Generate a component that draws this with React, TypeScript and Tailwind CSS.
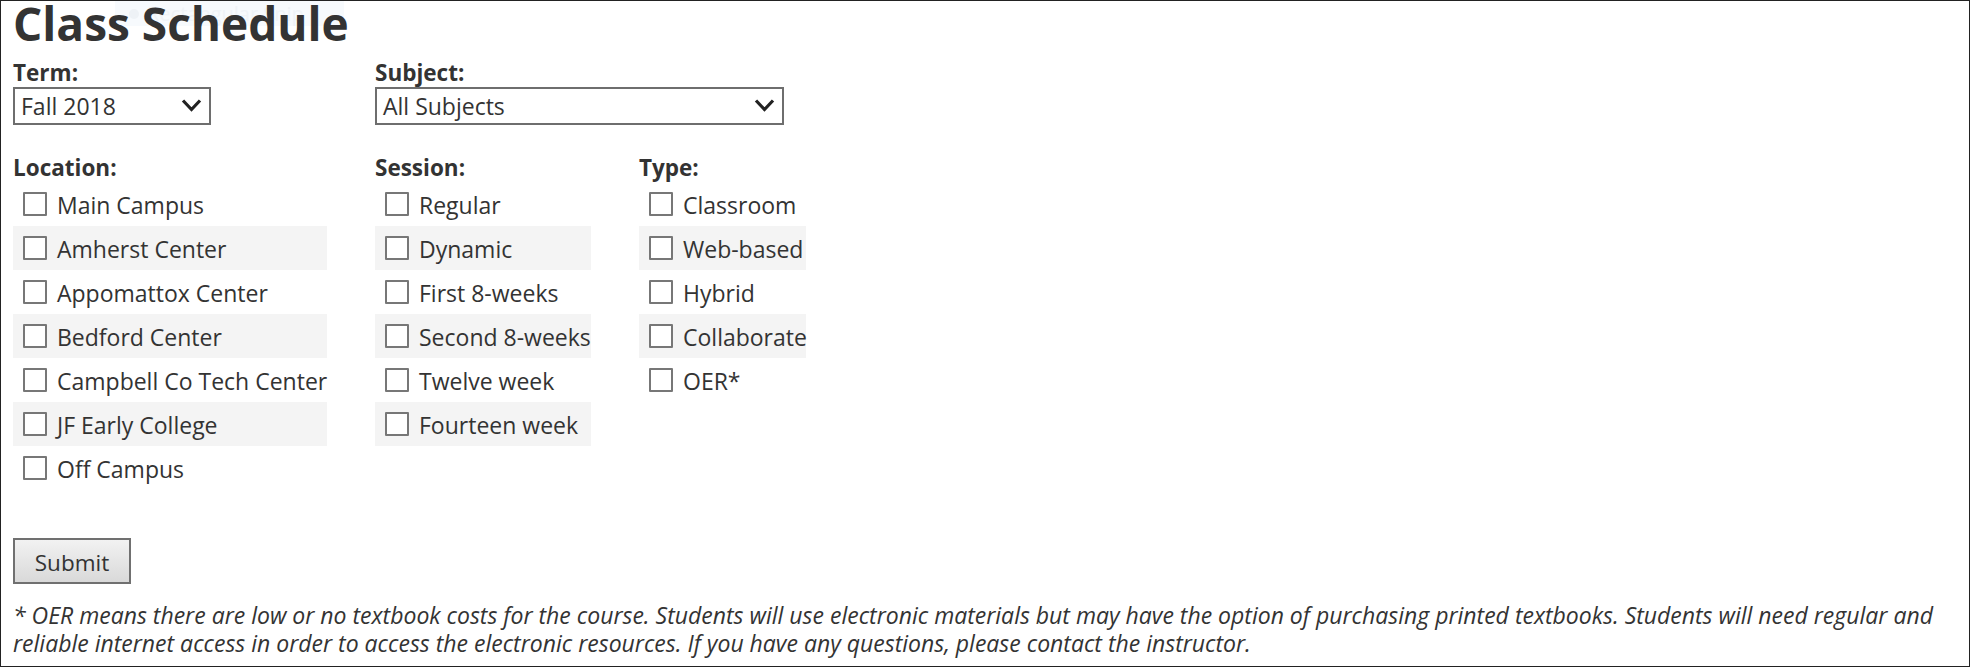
import React from "react";

const locations = [
  "Main Campus",
  "Amherst Center",
  "Appomattox Center",
  "Bedford Center",
  "Campbell Co Tech Center",
  "JF Early College",
  "Off Campus",
];
const sessions = ["Regular", "Dynamic", "First 8-weeks", "Second 8-weeks", "Twelve week", "Fourteen week"];
const types = ["Classroom", "Web-based", "Hybrid", "Collaborate", "OER*"];

function Chevron() {
  return (
    <svg width="21" height="15" viewBox="0 0 21 15" className="shrink-0">
      <path d="M2 2.5 L10.5 11.5 L19 2.5" fill="none" stroke="#222" strokeWidth="3.2" />
    </svg>
  );
}

function Select({ value, width }: { value: string; width: string }) {
  return (
    <div
      className={`${width} h-[38px] box-border border-2 border-[#6e6e6e] flex items-start justify-between pl-[6px] pr-[7px] bg-white`}
    >
      <span className="text-[23px] leading-[35px] text-[#333] whitespace-nowrap">{value}</span>
      <div className="mt-[9px]">
        <Chevron />
      </div>
    </div>
  );
}

function Column({ title, items, width }: { title: string; items: string[]; width: string }) {
  return (
    <div className={`${width} shrink-0`}>
      <div className="mt-[2px] text-[22.5px] font-bold leading-[28px] text-[#333]">{title}</div>
      <div>
        {items.map((it, i) => (
          <div
            key={it}
            className={`h-[44px] flex items-start ${i % 2 === 1 ? "bg-[#f4f4f4]" : ""}`}
          >
            <span className="ml-[10px] mt-[10px] w-[24px] h-[24px] box-border border-2 border-[#777] bg-white rounded-[1px] shrink-0" />
            <span className="ml-[10px] mt-[3px] text-[23px] leading-[40px] text-[#333] whitespace-nowrap">{it}</span>
          </div>
        ))}
      </div>
    </div>
  );
}

export default function App() {
  return (
    <div
      className="relative w-[1970px] h-[667px] box-border border border-[#222] bg-white overflow-hidden pl-[12px] pr-[12px]"
      style={{ fontFamily: '"Open Sans", "DejaVu Sans", sans-serif' }}
    >
      <div className="absolute left-[114px] top-0 w-[229px] h-[25px] bg-[#f7fafd] flex items-center pl-[14px] gap-[8px] pointer-events-none">
        <span className="w-[10px] h-[10px] rounded-full bg-[#eef2f6]" />
        <span className="text-[20px] text-[#eff3f7] leading-none">Rectangular Snip</span>
      </div>
      <h1 className="relative text-[46px] font-bold leading-[44px] text-[#333]">Class Schedule</h1>

      <div className="flex gap-[48px] mt-[14px]">
        <div className="w-[314px] shrink-0">
          <div className="text-[22.5px] font-bold leading-[28px] text-[#333]">Term:</div>
          <Select value="Fall 2018" width="w-[198px]" />
        </div>
        <div>
          <div className="text-[22.5px] font-bold leading-[28px] text-[#333]">Subject:</div>
          <Select value="All Subjects" width="w-[409px]" />
        </div>
      </div>

      <div className="flex gap-[48px] mt-[27px]">
        <Column title="Location:" items={locations} width="w-[314px]" />
        <Column title="Session:" items={sessions} width="w-[216px]" />
        <Column title="Type:" items={types} width="w-[167px]" />
      </div>

      <button className="block mt-[48px] w-[118px] h-[46px] box-border border-2 border-[#707070] bg-gradient-to-b from-[#f2f2f2] to-[#d9d9d9] text-[22.5px] leading-[42px] pt-[2px] text-[#333]">
        Submit
      </button>

      <p className="mt-[18px] text-[23px] italic leading-[27.5px] text-[#333]">
        * OER means there are low or no textbook costs for the course. Students will use electronic materials but may have the option of purchasing printed textbooks. Students will need regular and reliable internet access in order to access the electronic resources. If you have any questions, please contact the instructor.
      </p>
    </div>
  );
}
